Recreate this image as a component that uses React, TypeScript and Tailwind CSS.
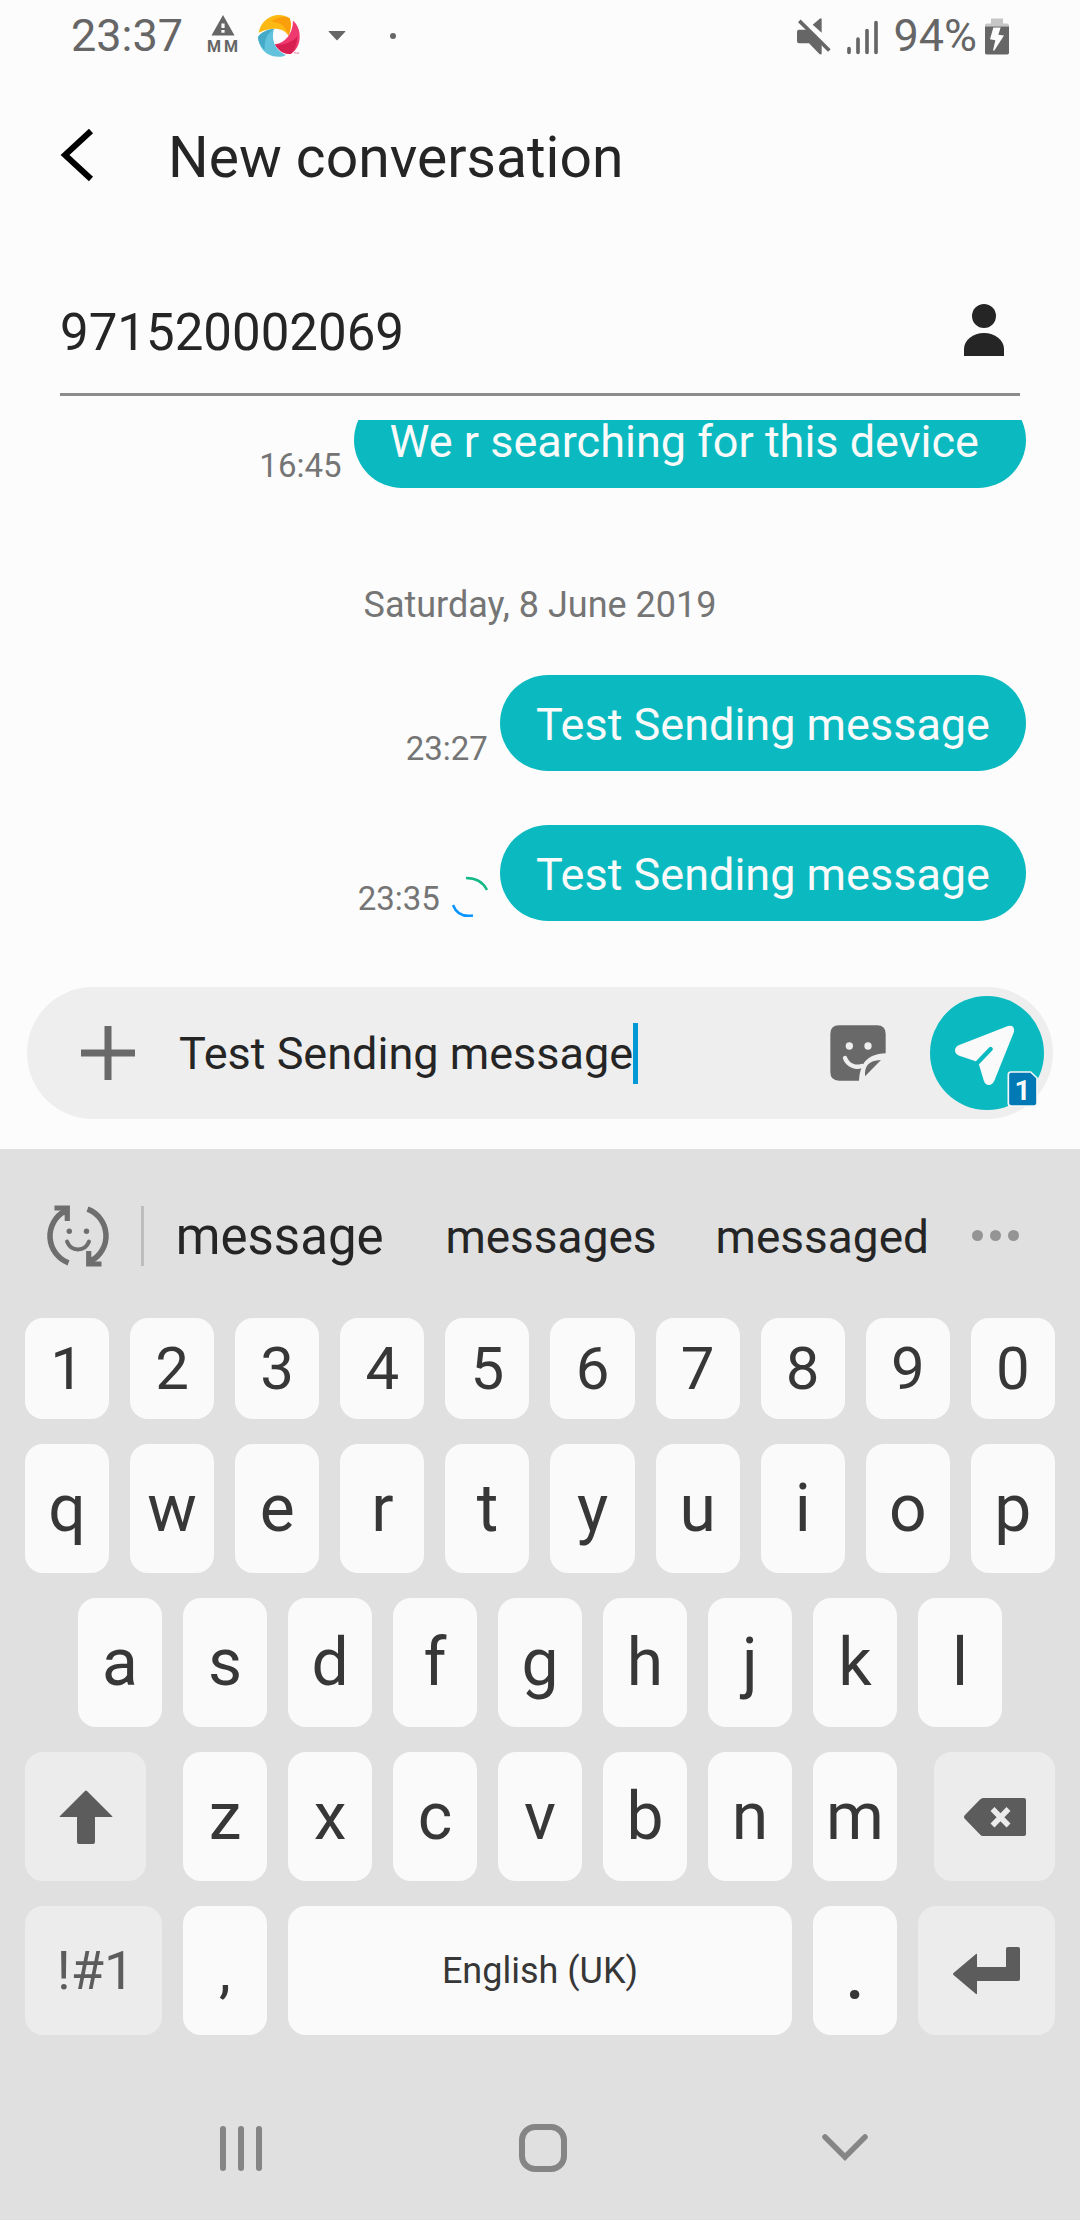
import React from "react";

const BackIcon = () => (
  <svg viewBox="0 0 34 54" className="h-[54px] w-[34px]" fill="none" stroke="#000" strokeWidth="6">
    <path d="M31 3 5 27 31 51" />
  </svg>
);

const NetworkAlertIcon = () => (
  <div className="flex flex-col items-center">
    <svg viewBox="0 0 24 21" className="h-[21px] w-6">
      <path d="M12 0 23.5 20.5H.5z" fill="#666" />
      <path d="M10.4 8.5h3.2v4.6h-3.2zM10.4 15h3.2v2.8h-3.2z" fill="#fcfcfc" />
    </svg>
    <div className="flex gap-[3px] text-[16px] leading-[21px] font-bold">
      <span>M</span>
      <span>M</span>
    </div>
  </div>
);

const BallIcon = () => (
  <svg viewBox="0 0 126 126" className="h-[42px] w-[42px]">
    <path d="M2 53C8 20 35 0 62 0c14 0 26 4 33 10 6 18 4 36-4 52C78 38 42 34 2 53z" fill="#fdb913" />
    <path d="M40 20C55 8 75 2 95 10c6 18 4 36-4 52C86 34 68 22 40 20z" fill="#fb9e0b" />
    <path d="M105 17c14 12 21 30 20 49 0 22-10 41-27 51-18 2-38-9-47-29 30-4 54-32 54-71z" fill="#ee3a6e" />
    <path d="M51 88c28 4 52-6 67-25-1 26-9 46-20 54-18 2-38-9-47-29z" fill="#d81f52" />
    <path d="M0 66c10-14 28-22 48-24-10 32 4 66 36 78-10 7-28 6-39 4C18 116 2 94 0 66z" fill="#62c2dc" />
    <path d="M0 66c10-14 28-22 48-24C30 52 18 72 20 104 8 94 1 80 0 66z" fill="#45aac8" />
    <path d="M108 113l6 1M117 116v-3l2 2 2-2v3" stroke="#ee3a6e" strokeWidth="2" fill="none" />
  </svg>
);

const MuteIcon = () => (
  <svg viewBox="108 50 102 110" className="h-[37px] w-[34px]" fill="#666">
    <path d="M114 85h28l40 40v33h-6l-32-33h-30q-6 0-6-6V91q0-6 6-6zM155 70l22-19h5v43z" />
    <path d="M115 58 205 147" stroke="#666" strokeWidth="11" />
  </svg>
);

const SignalIcon = () => (
  <svg viewBox="259 50 96 110" className="h-[37px] w-8" stroke="#666" strokeWidth="11" strokeLinecap="round">
    <path d="M265 141v12M292 113v40M319 87v66M346 63v90" />
  </svg>
);

const BatteryIcon = () => (
  <svg viewBox="675 50 72 110" className="h-[37px] w-6">
    <path d="M693 51h36v15h12q6 0 6 6v4h-72v-4q0-6 6-6h12z" fill="#c6c6c6" />
    <path d="M675 75h72v79q0 5-5 5h-62q-5 0-5-5z" fill="#666" />
    <path d="M700 78h22l-7 22 17 2-29 45h-4l7-31-16-3z" fill="#fcfcfc" />
  </svg>
);

const PersonIcon = () => (
  <svg viewBox="0 0 40 52" className="h-[52px] w-10" fill="#252525">
    <circle cx="20" cy="12" r="12" />
    <path d="M0 52v-7C0 36 9 29 20 29s20 7 20 16v7z" />
  </svg>
);

const SpinnerIcon = () => (
  <svg viewBox="2 0 36 42" className="mb-[3px] h-[42px] w-9" fill="none" strokeWidth="2.5">
    <path d="M16 2C25 2 33 6 37 14" stroke="#12b886" />
    <path d="M3 29C6 37 13 41 23 39.500" stroke="#0a96ff" />
  </svg>
);

const PlusIcon = () => (
  <svg viewBox="0 0 54 54" className="h-[54px] w-[54px]" stroke="#696969" strokeWidth="7">
    <path d="M27 0v54M0 27h54" />
  </svg>
);

const StickerIcon = () => (
  <svg viewBox="150 195 168 168" className="h-14 w-14">
    <path
      d="M177 196h114q26 0 26 26v58c-46 2-76 20-80 82h-60q-26 0-26-26V222q0-26 26-26z"
      fill="#696969"
    />
    <path d="M255 349c-2-30 10-48 48-49z" fill="#696969" />
    <path d="M195 294c9 24 34 30 50 24" stroke="#eee" strokeWidth="13" strokeLinecap="round" fill="none" />
    <circle cx="208" cy="258" r="11" fill="#eee" />
    <circle cx="264" cy="258" r="11" fill="#eee" />
  </svg>
);

const SendIcon = () => (
  <svg viewBox="450 108 342 342" className="h-full w-full">
    <path
      d="M684 198q20-4 18 17l-59 147q-7 13-16 13-11 0-15-11l-15-50-10-10-49-17q-13-4-13-16 1-11 11-15z"
      fill="#fafafa"
    />
    <path d="M586 315 632 267" stroke="#0abac0" strokeWidth="13" strokeLinecap="round" />
  </svg>
);

const SimIcon = () => (
  <svg viewBox="681 332 93 108" className="h-9 w-[31px]">
    <path
      d="M693 335h59l19 18v76q0 8-8 8h-70q-8 0-8-8v-86q0-8 8-8z"
      fill="#0079b5"
      stroke="#f7f7f7"
      strokeWidth="5"
    />
  </svg>
);

const EmojiSwapIcon = () => (
  <svg viewBox="0 0 64 64" className="h-16 w-16" fill="none" stroke="#6e6e6e">
    <path d="M22.500 58.800A28.500 28.500 0 0 1 19 7" strokeWidth="5.500" />
    <path d="M8.500 4H21.300V17" strokeWidth="5.200" />
    <path d="M41.500 5.200A28.500 28.500 0 0 1 45 57" strokeWidth="5.500" />
    <path d="M55.500 60H42.700V47" strokeWidth="5.200" />
    <path d="M14 10 22 3v9zM50 54 42 61v-9z" fill="#6e6e6e" stroke="none" />
    <circle cx="23.300" cy="27.300" r="2.700" fill="#6e6e6e" stroke="none" />
    <circle cx="40.500" cy="27.300" r="2.700" fill="#6e6e6e" stroke="none" />
    <path d="M21 37.500c4 10.500 18 10.500 22 0" strokeWidth="4" strokeLinecap="round" />
  </svg>
);

const ShiftIcon = () => (
  <svg viewBox="0 0 54 54" className="h-[54px] w-[54px]" fill="#5c5c5c">
    <path d="M26 1q1-1 2 0l25 25q1 1 0 1H36v25q0 2-2 2H20q-2 0-2-2V27H1q-1 0 0-1z" />
  </svg>
);

const BackspaceIcon = () => (
  <svg viewBox="0 0 62 38" className="h-[38px] w-[62px]">
    <path d="M1 17 16 1.500Q17.500 0 19 0h41q2 0 2 2v34q0 2-2 2H19q-1.500 0-3-1.500L1 21q-2-2 0-4z" fill="#5c5c5c" />
    <path d="M28.500 11 44.500 27.500M44.500 11 28.500 27.500" stroke="#ececec" strokeWidth="5.500" />
  </svg>
);

const EnterIcon = () => (
  <svg viewBox="0 0 67 48" className="h-12 w-[67px]" fill="#5c5c5c">
    <path d="M.5 26 23 7q1-.5 1 .5V20h29V2q0-2 2-2h10q2 0 2 2v30q0 2-2 2H24v12.500q0 1-1 .5L.500 28q-1-1 0-2z" />
  </svg>
);

const keyBase = "flex items-center justify-center rounded-[18px]";

type KeyProps = { label: string; children?: React.ReactNode; className?: string };

const Key = ({ label, children, className = "flex-1 text-[66px]" }: KeyProps) => (
  <button aria-label={label} className={`${keyBase} min-w-0 basis-0 bg-[#fafafa] text-[#373737] ${className}`}>
    {children ?? label}
  </button>
);

const FnKey = ({ label, children, className = "" }: KeyProps) => (
  <button aria-label={label} className={`${keyBase} min-w-0 basis-0 bg-[#ececec] text-[#5c5c5c] ${className}`}>
    {children}
  </button>
);

const Bubble = ({ time, text, sending }: { time: string; text: string; sending?: boolean }) => (
  <div className="flex shrink-0 items-end justify-end gap-3">
    <div className="flex items-end gap-3 text-[33px] leading-[44px] text-[#757575]">
      <time>{time}</time>
      {sending && <SpinnerIcon />}
    </div>
    <p className="flex h-24 items-center rounded-[48px] bg-[#0abac0] px-9 pt-1 text-[45px] leading-[54px] whitespace-pre text-[#fafafa]">
      {text}
    </p>
  </div>
);

export default function App() {
  return (
    <div className="flex h-screen flex-col bg-[#fcfcfc] font-[Roboto,sans-serif] text-[#252525]">
      <div className="flex h-[72px] shrink-0 items-center justify-between pr-[71px] pl-[71px] text-[#666]">
        <div className="flex items-center">
          <span className="text-[45px] leading-[72px]">23:37</span>
          <div className="ml-6">
            <NetworkAlertIcon />
          </div>
          <div className="ml-5">
            <BallIcon />
          </div>
          <svg viewBox="0 0 18 10" className="ml-7 h-[10px] w-[18px]" fill="#666">
            <path d="M1 0h16q1 0 0 1L9.500 9q-.5.5-1 0L1 1Q0 0 1 0z" />
          </svg>
          <span className="ml-11 h-[6px] w-[6px] rounded-full bg-[#666]" />
        </div>
        <div className="flex items-center">
          <MuteIcon />
          <div className="ml-4">
            <SignalIcon />
          </div>
          <span className="ml-[14px] text-[45px] leading-[72px]">94%</span>
          <div className="ml-2">
            <BatteryIcon />
          </div>
        </div>
      </div>

      <header className="flex h-[172px] shrink-0 items-center gap-[74px] pl-[60px]">
        <button aria-label="Back" className="-mt-1.5">
          <BackIcon />
        </button>
        <h1 className="text-[57px] leading-[68px]">New conversation</h1>
      </header>

      <div className="mx-[60px] mb-6 flex shrink-0 items-center border-b-[3px] border-[#8c8c8c] pt-[59px] pr-4 pb-[30px]">
        <input
          aria-label="Recipient"
          defaultValue="971520002069"
          className="h-[60px] min-w-0 flex-1 bg-transparent text-[51px] leading-[60px] outline-none"
        />
        <button aria-label="Choose contact" className="-mt-1.5">
          <PersonIcon />
        </button>
      </div>

      <main className="flex min-h-0 flex-1 flex-col justify-end overflow-hidden pr-[54px] pb-[66px]">
        <Bubble time="16:45" text={"We r searching for this device "} />
        <p className="mt-24 mb-[49px] -mr-[54px] shrink-0 text-center text-[36px] leading-[42px] text-[#757575]">
          Saturday, 8 June 2019
        </p>
        <div className="flex shrink-0 flex-col gap-[54px]">
          <Bubble time="23:27" text="Test Sending message" />
          <Bubble time="23:35" text="Test Sending message" sending />
        </div>
      </main>

      <div className="mx-[27px] mb-[30px] flex h-[132px] shrink-0 items-center rounded-full bg-[#eee] pr-[9px] pl-[54px]">
        <button aria-label="Add attachment">
          <PlusIcon />
        </button>
        <div className="ml-11 flex min-w-0 flex-1 items-center">
          <input
            aria-label="Message"
            defaultValue="Test Sending message"
            className="h-[61px] field-sizing-content bg-transparent text-[45px] leading-[61px] outline-none"
          />
          <span className="h-[61px] w-[5px] bg-[#0099d5]" />
        </div>
        <button aria-label="Stickers" className="mr-11">
          <StickerIcon />
        </button>
        <button aria-label="Send with SIM 1" className="relative h-[114px] w-[114px] rounded-full bg-[#0abac0]">
          <SendIcon />
          <span className="absolute right-[6px] bottom-[3px]">
            <SimIcon />
            <span className="absolute inset-0 flex items-center justify-center pt-1 text-[28px] leading-none font-bold text-[#fafafa]">
              1
            </span>
          </span>
        </button>
      </div>

      <section aria-label="Keyboard" className="shrink-0 bg-[#e0e0e0]">
        <div className="flex h-[169px] items-center pt-1">
          <div className="flex w-[141px] justify-start pl-[46px]">
            <button aria-label="Emoji and predictive text">
              <EmojiSwapIcon />
            </button>
          </div>
          <span className="h-[60px] w-[3px] bg-[#bdbdbd]" />
          <button className="flex-1 basis-0 pt-0.5 text-[51px] leading-[60px]">message</button>
          <button className="flex-1 basis-0 pt-0.5 text-[46px] leading-[60px]">messages</button>
          <button className="flex-1 basis-0 pt-0.5 text-[46px] leading-[60px]">messaged</button>
          <button aria-label="More suggestions" className="mr-[46px] flex w-[76px] justify-center gap-[7px]">
            <span className="h-[11px] w-[11px] rounded-full bg-[#949494]" />
            <span className="h-[11px] w-[11px] rounded-full bg-[#949494]" />
            <span className="h-[11px] w-[11px] rounded-full bg-[#949494]" />
          </button>
        </div>

        <div className="flex flex-col gap-[25px] px-[25px] pb-[41px]">
          <div className="flex h-[101px] gap-[21px]">
            {[..."1234567890"].map((k) => (
              <Key key={k} label={k} className="flex-1 text-[60px]" />
            ))}
          </div>
          <div className="flex h-[129px] gap-[21px]">
            {[..."qwertyuiop"].map((k) => (
              <Key key={k} label={k} />
            ))}
          </div>
          <div className="flex h-[129px] gap-[21px] px-[53px]">
            {[..."asdfghjkl"].map((k) => (
              <Key key={k} label={k} />
            ))}
          </div>
          <div className="flex h-[129px] gap-[37px]">
            <FnKey label="Shift" className="grow-[121]">
              <ShiftIcon />
            </FnKey>
            <div className="flex min-w-0 grow-[714] basis-0 gap-[21px]">
              {[..."zxcvbnm"].map((k) => (
                <Key key={k} label={k} />
              ))}
            </div>
            <FnKey label="Backspace" className="grow-[121]">
              <BackspaceIcon />
            </FnKey>
          </div>
          <div className="flex h-[129px] gap-[21px]">
            <FnKey label="Symbols" className="grow-[137] text-[54px]">
              <span className="pl-1">!#1</span>
            </FnKey>
            <Key label="," className="grow-[84] text-[60px]" />
            <Key label="Space" className="grow-[504] text-[36px]">
              English (UK)
            </Key>
            <Key label="." className="grow-[84] text-[84px]" />
            <FnKey label="Enter" className="grow-[137]">
              <EnterIcon />
            </FnKey>
          </div>
        </div>
      </section>

      <nav className="grid h-36 shrink-0 grid-cols-3 items-center justify-items-center bg-[#e0e0e0] pr-[84px] pl-[90px]">
        <button aria-label="Recent apps" className="flex gap-3">
          <span className="h-[45px] w-[6px] rounded-full bg-[#858585]" />
          <span className="h-[45px] w-[6px] rounded-full bg-[#858585]" />
          <span className="h-[45px] w-[6px] rounded-full bg-[#858585]" />
        </button>
        <button aria-label="Home" className="h-12 w-12 rounded-[16px] border-[6px] border-[#858585]" />
        <button aria-label="Hide keyboard">
          <svg viewBox="0 0 46 28" className="h-7 w-[46px]" fill="none" stroke="#858585" strokeWidth="5.500" strokeLinecap="round">
            <path d="M3 3 23 23 43 3" />
          </svg>
        </button>
      </nav>
    </div>
  );
}
